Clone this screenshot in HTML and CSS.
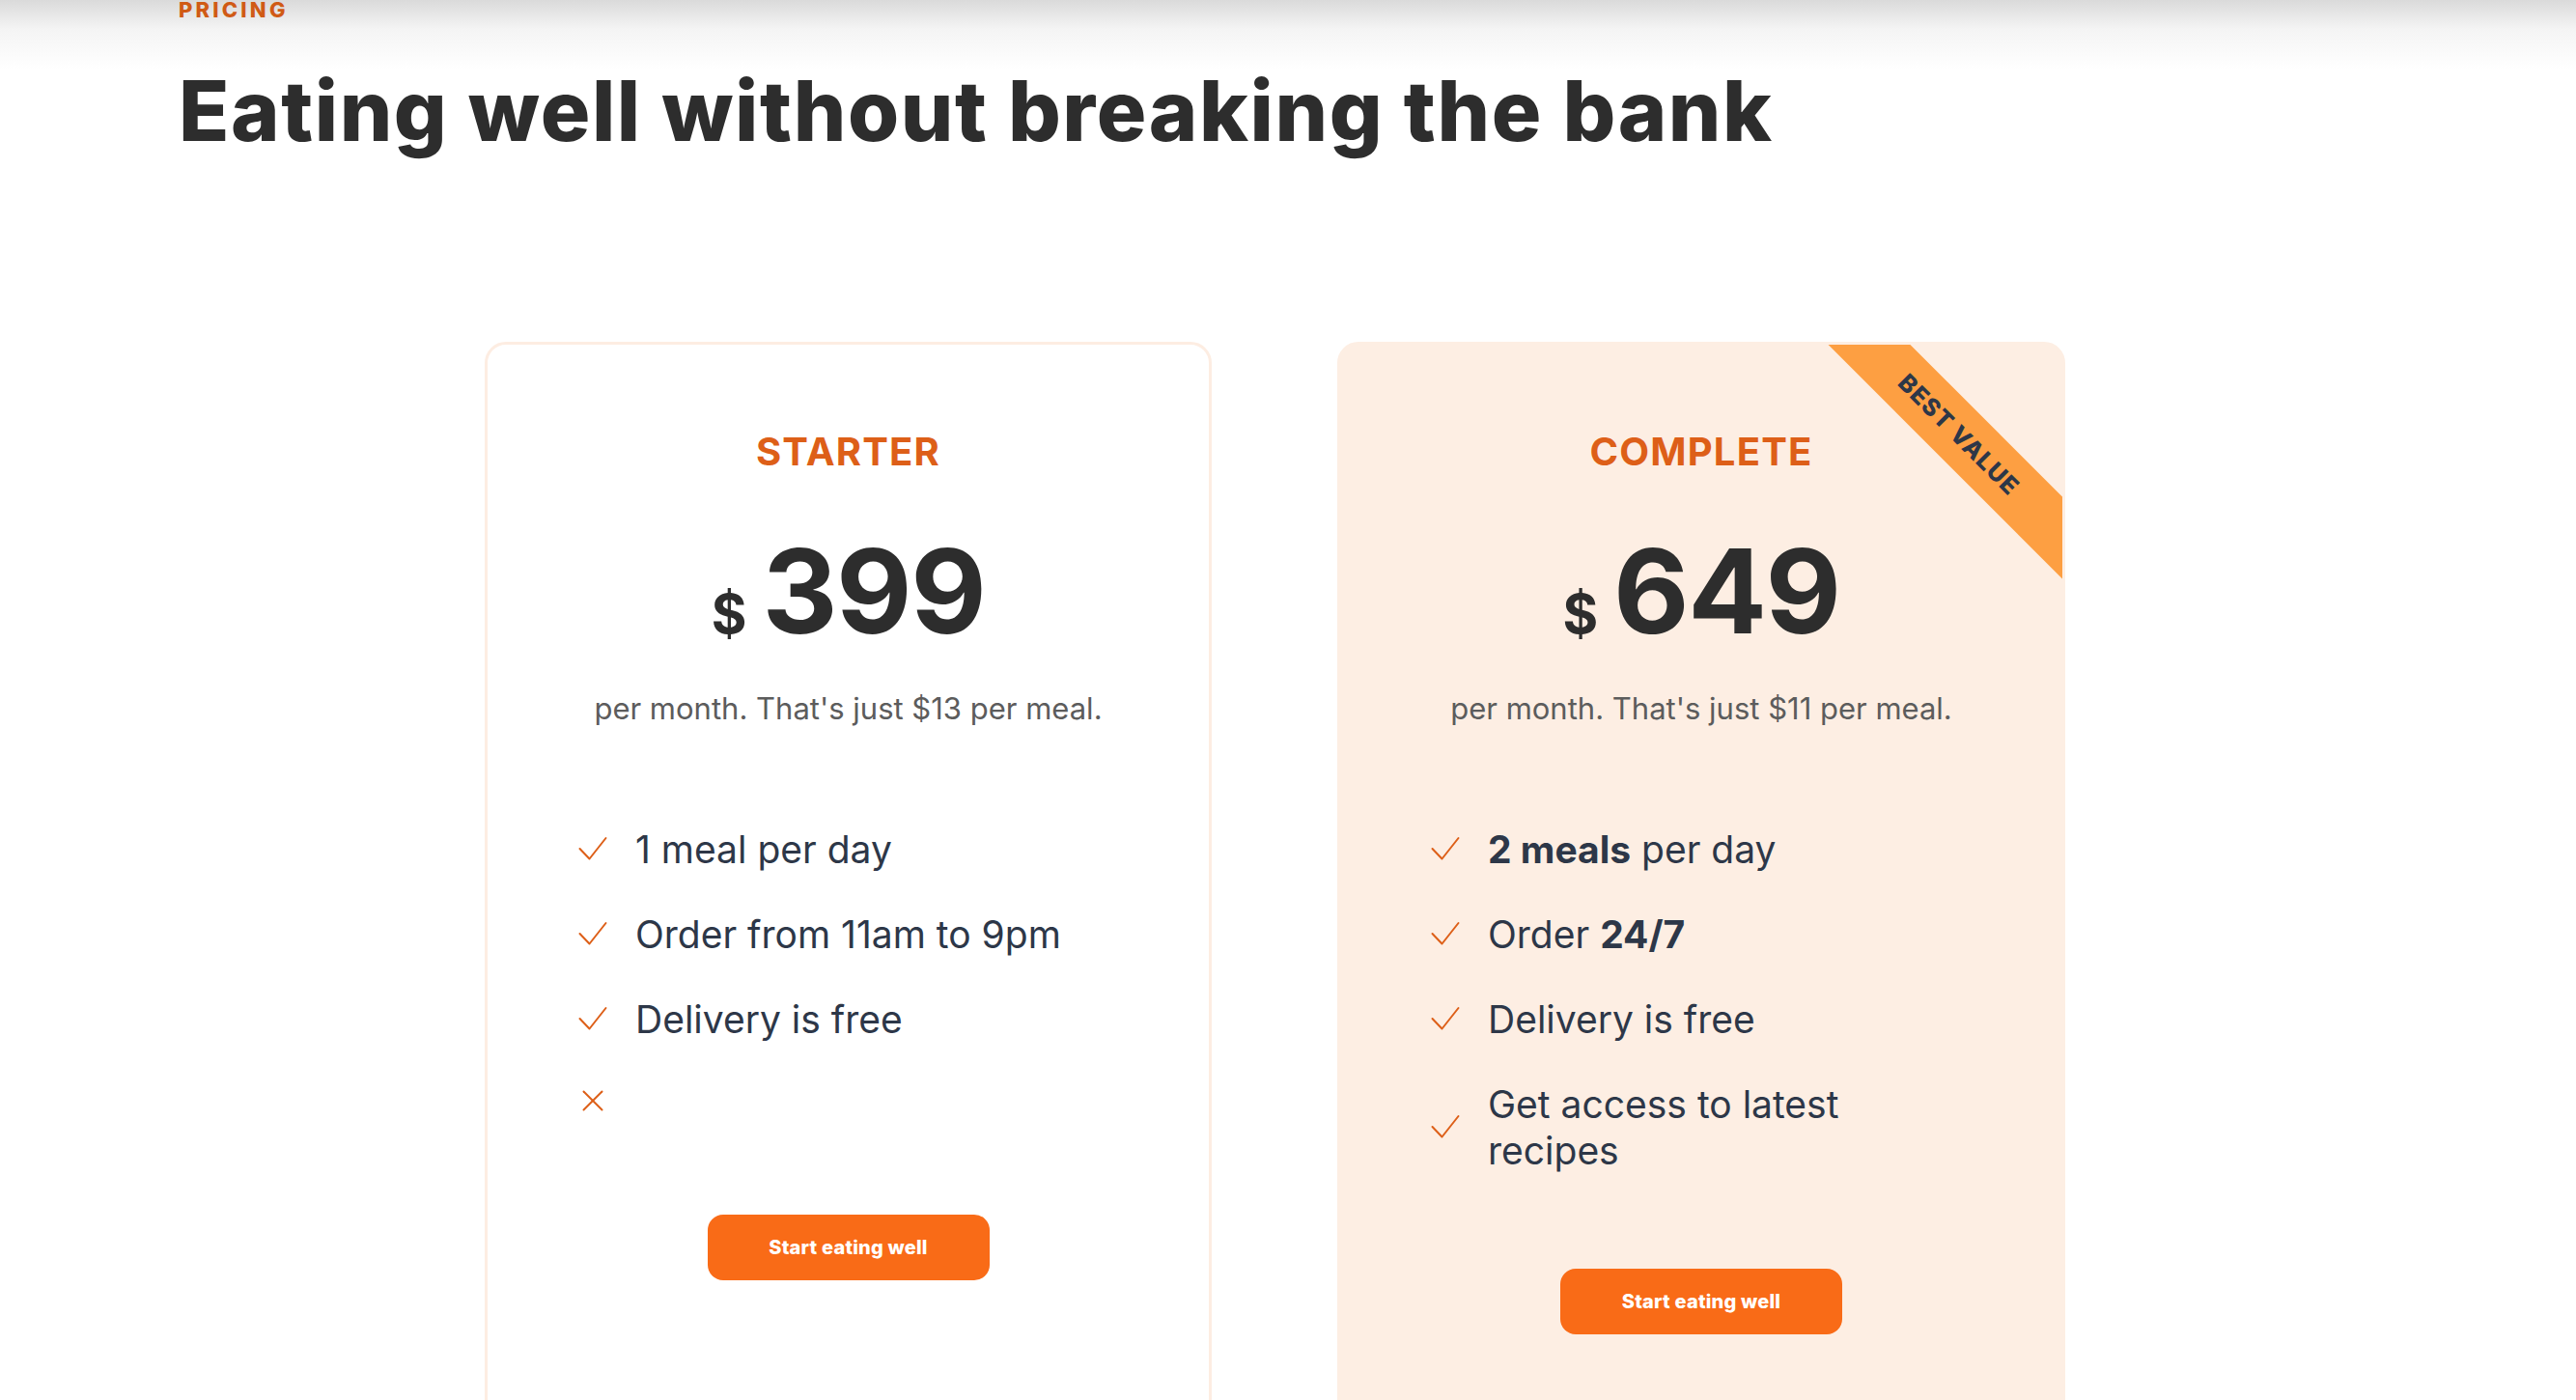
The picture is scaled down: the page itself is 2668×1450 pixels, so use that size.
FILE: index.html
```html
<!DOCTYPE html>
<html lang="en">
<head>
<meta charset="utf-8">
<title>Pricing</title>
<link rel="stylesheet" href="styles.css">
</head>
<body>
<section class="pricing">
  <p class="eyebrow">PRICING</p>
  <h1 class="title">Eating well without breaking the bank</h1>

  <div class="plans">
    <article class="plan plan--starter">
      <h2 class="plan-name">STARTER</h2>
      <p class="price"><span class="currency">$</span><span class="amount">399</span></p>
      <p class="per-meal">per month. That's just $13 per meal.</p>
      <ul class="features">
        <li class="feature"><span class="icon"><svg viewBox="0 0 32 32" width="32" height="32"><polyline points="2.5,15 12.5,25.5 29.5,4" /></svg></span><span class="feature-text">1 meal per day</span></li>
        <li class="feature"><span class="icon"><svg viewBox="0 0 32 32" width="32" height="32"><polyline points="2.5,15 12.5,25.5 29.5,4" /></svg></span><span class="feature-text">Order from 11am to 9pm</span></li>
        <li class="feature"><span class="icon"><svg viewBox="0 0 32 32" width="32" height="32"><polyline points="2.5,15 12.5,25.5 29.5,4" /></svg></span><span class="feature-text">Delivery is free</span></li>
        <li class="feature feature--empty"><span class="icon"><svg viewBox="0 0 32 32" width="32" height="32"><line x1="6.5" y1="6.5" x2="25.5" y2="25.5" /><line x1="25.5" y1="6.5" x2="6.5" y2="25.5" /></svg></span></li>
      </ul>
      <div class="cta-wrap"><a class="cta" href="#">Start eating well</a></div>
    </article>

    <article class="plan plan--complete">
      <div class="ribbon">BEST VALUE</div>
      <h2 class="plan-name">COMPLETE</h2>
      <p class="price"><span class="currency">$</span><span class="amount">649</span></p>
      <p class="per-meal">per month. That's just $11 per meal.</p>
      <ul class="features">
        <li class="feature"><span class="icon"><svg viewBox="0 0 32 32" width="32" height="32"><polyline points="2.5,15 12.5,25.5 29.5,4" /></svg></span><span class="feature-text"><strong>2 meals</strong> per day</span></li>
        <li class="feature"><span class="icon"><svg viewBox="0 0 32 32" width="32" height="32"><polyline points="2.5,15 12.5,25.5 29.5,4" /></svg></span><span class="feature-text">Order <strong>24/7</strong></span></li>
        <li class="feature"><span class="icon"><svg viewBox="0 0 32 32" width="32" height="32"><polyline points="2.5,15 12.5,25.5 29.5,4" /></svg></span><span class="feature-text">Delivery is free</span></li>
        <li class="feature"><span class="icon"><svg viewBox="0 0 32 32" width="32" height="32"><polyline points="2.5,15 12.5,25.5 29.5,4" /></svg></span><span class="feature-text">Get access to latest recipes</span></li>
      </ul>
      <div class="cta-wrap"><a class="cta" href="#">Start eating well</a></div>
    </article>
  </div>
</section>
</body>
</html>
```

FILE: styles.css
```css
* { box-sizing: border-box; }

html, body {
  margin: 0;
  padding: 0;
}

body {
  font-family: "Inter", "Roboto", "Liberation Sans", sans-serif;
  color: #2d2d2d;
  background: #ffffff linear-gradient(to bottom, #dadada 0px, #f4f4f4 30px, #ffffff 72px) no-repeat;
  background-size: 100% 72px;
  min-height: 1450px;
  overflow: hidden;
}

.pricing {
  padding: 0 0 0 185px;
}

.eyebrow {
  margin: -1px 0 0 0;
  font-size: 22px;
  line-height: 22px;
  font-weight: 800;
  letter-spacing: 3.2px;
  color: #d05a15;
}

.title {
  margin: 51px 0 0 0;
  font-size: 86px;
  line-height: 86px;
  font-weight: 800;
  letter-spacing: 1.6px;
  color: #2d2d2d;
}

.plans {
  display: grid;
  grid-template-columns: 753px 754px;
  column-gap: 130px;
  margin: 196px 0 0 317px;
}

.plan {
  position: relative;
  overflow: hidden;
  border: 3px solid #fdede2;
  border-radius: 22px;
  padding: 91px 0 200px 0;
  background: #ffffff;
  text-align: center;
}

.plan--complete {
  background: #fdeee3;
  border-color: #fdeee3;
}

.ribbon {
  position: absolute;
  top: 70px;
  right: -100px;
  width: 400px;
  height: 60px;
  padding-right: 20px;
  display: flex;
  align-items: center;
  justify-content: center;
  background: #fd9f42;
  color: #2d3748;
  font-size: 25px;
  font-weight: 800;
  letter-spacing: 1px;
  transform: rotate(45deg);
}

.plan-name {
  margin: 0;
  font-size: 40px;
  line-height: 40px;
  font-weight: 700;
  letter-spacing: 1.2px;
  color: #dd5f18;
}

.price {
  margin: 64px 0 0 0;
  display: flex;
  justify-content: center;
  align-items: baseline;
  gap: 16px;
  height: 121px;
  line-height: 121px;
  color: #2d2d2d;
}

.currency {
  font-size: 56px;
  line-height: 56px;
  font-weight: 700;
}

.amount {
  font-size: 121px;
  line-height: 121px;
  font-weight: 700;
  letter-spacing: -1.5px;
}

.per-meal {
  margin: 44px 0 0 0;
  font-size: 31px;
  line-height: 33px;
  color: #5c5c5c;
}

.features {
  list-style: none;
  margin: 106px 0 0 0;
  padding: 0 80px 0 93px;
  display: flex;
  flex-direction: column;
  gap: 40px;
  text-align: left;
}

.feature {
  display: flex;
  align-items: center;
  gap: 28px;
  font-size: 39px;
  line-height: 48px;
  color: #2d3748;
}

.feature strong {
  font-weight: 700;
}

.feature-text {
  max-width: 470px;
  letter-spacing: 0;
}

.icon {
  flex: 0 0 32px;
  height: 40px;
  display: flex;
  align-items: center;
}

.icon svg {
  display: block;
  fill: none;
  stroke: #dd5f18;
  stroke-width: 2;
  stroke-linecap: round;
  stroke-linejoin: round;
}

.cta-wrap {
  margin-top: 98px;
  display: flex;
  justify-content: center;
}

.cta {
  display: flex;
  align-items: center;
  justify-content: center;
  width: 292px;
  height: 68px;
  border-radius: 16px;
  background: #f96b17;
  color: #ffffff;
  font-size: 20px;
  font-weight: 800;
  text-decoration: none;
  letter-spacing: 0.2px;
}
```
